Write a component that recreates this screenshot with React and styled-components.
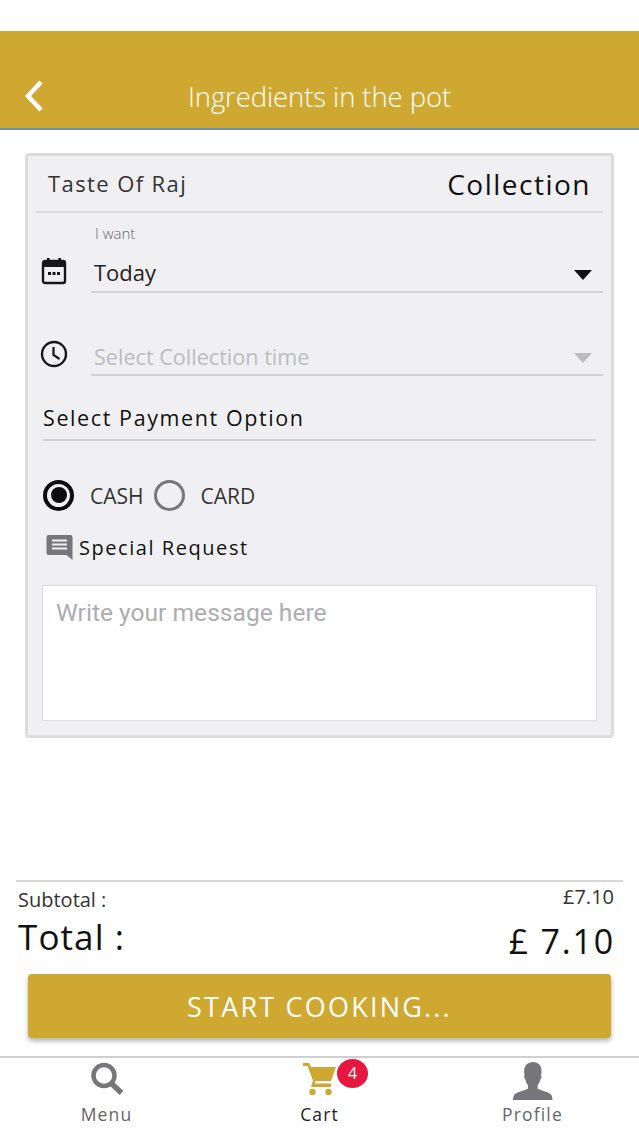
import React from 'react'
import styled, { createGlobalStyle } from 'styled-components'

const GOLD = '#cfa832'

const GlobalStyle = createGlobalStyle`
    html, body {
        margin: 0;
        padding: 0;
        background: #fff;
    }

    * {
        box-sizing: border-box;
    }
`

const Page = styled.div`
    width: 639px;
    height: 1136px;
    display: flex;
    flex-direction: column;
    overflow: hidden;
    font-family: "Open Sans", "Noto Sans", sans-serif;
    color: #111;
    background: #fff;
`

const Header = styled.header`
    height: 99px;
    margin-top: 31px;
    padding: 0 24px 13px;
    display: flex;
    align-items: flex-end;
    position: relative;
    background: ${GOLD};
    border-bottom: 2px solid #7193a6;
`

const BackIcon = styled.svg`
    width: 20px;
    height: 32px;
    margin-bottom: 3px;
`

const Title = styled.h1`
    position: absolute;
    left: 0;
    right: 0;
    bottom: 13px;
    margin: 0;
    text-align: center;
    font-size: 27.5px;
    line-height: 36px;
    font-weight: 300;
    letter-spacing: -0.1px;
    color: #fff;
`

const Card = styled.section`
    height: 585px;
    margin: 23px 25px 0;
    padding: 0 8px;
    background: #f0f0f2;
    border: 3px solid #dcdcdf;
    border-radius: 4px;
`

const CardHead = styled.div`
    height: 57px;
    padding: 0 12px;
    display: flex;
    justify-content: space-between;
    align-items: center;
    border-bottom: 2px solid #dbdbdd;
`

const Restaurant = styled.span`
    margin-bottom: 2px;
    font-size: 22px;
    letter-spacing: 1.4px;
    color: #333;
`

const Mode = styled.span`
    font-size: 28px;
    letter-spacing: 1.5px;
    color: #111;
`

const FieldRow = styled.div`
    height: ${p => p.$height}px;
    margin-top: ${p => p.$top || 0}px;
    display: flex;
    align-items: flex-end;
`

const FieldIcon = styled.div`
    width: 55px;
    flex: none;
    display: flex;
    justify-content: center;
    padding: 0 20px ${p => p.$bottom}px 0;
    height: 100%;
    align-items: flex-end;
`

const Field = styled.div`
    flex: 1;
    border-bottom: 2px solid #d2d2d4;
`

const FieldLabel = styled.div`
    padding-left: 4px;
    font-size: 15px;
    line-height: 20px;
    font-weight: 300;
    color: #666;
    margin-bottom: 12px;
`

const FieldValue = styled.div`
    height: 36px;
    padding: 0 11px ${p => (p.$muted ? 0 : 2)}px 3px;
    display: flex;
    justify-content: space-between;
    align-items: center;
    font-size: ${p => (p.$muted ? 21.6 : 22)}px;
    color: ${p => (p.$muted ? '#bcbcbe' : '#222')};
`

const Caret = styled.span`
    width: 0;
    height: 0;
    margin-top: ${p => (p.$muted ? 4 : 6)}px;
    border-left: 9.5px solid transparent;
    border-right: 9.5px solid transparent;
    border-top: 10px solid ${p => (p.$muted ? '#bcbcbe' : '#111')};
`

const SectionTitle = styled.div`
    height: 43px;
    margin: 22px 7px 0 7px;
    font-size: 21.5px;
    line-height: 39px;
    letter-spacing: 1.6px;
    color: #111;
    border-bottom: 2px solid #d2d2d4;
`

const RadioRow = styled.div`
    margin: 38px 0 0 7px;
    display: flex;
    align-items: center;
    height: 32px;
`

const Radio = styled.span`
    width: 31px;
    height: 31px;
    flex: none;
    border-radius: 50%;
    border: ${p => (p.$checked ? '4px solid #0c0c0c' : '3px solid #77777a')};
    display: flex;
    align-items: center;
    justify-content: center;

    &::after {
        content: '';
        display: ${p => (p.$checked ? 'block' : 'none')};
        width: 16px;
        height: 16px;
        border-radius: 50%;
        background: #0c0c0c;
    }
`

const RadioLabel = styled.span`
    margin: 2px 10px 0 16px;
    font-size: 21px;
    color: #333;
`

const RequestRow = styled.div`
    margin: 22px 0 0 10px;
    display: flex;
    align-items: center;
    height: 28px;
    gap: 6px;
    font-size: 20px;
    letter-spacing: 1.55px;
    color: #111;
`

const MessageBox = styled.div`
    height: 136px;
    margin: 24px 6px 0 6px;
    padding: 9px 13px;
    background: #fff;
    border: 1px solid #dcdcde;
    font-family: Roboto, sans-serif;
    font-size: 24.6px;
    line-height: 36px;
    color: #adadb1;
`

const Summary = styled.section`
    margin: 142px 16px 0;
    padding: 0 9px 0 2px;
    border-top: 2px solid #d8d8d8;
`

const SummaryRow = styled.div`
    height: ${p => p.$height}px;
    display: flex;
    justify-content: space-between;
    align-items: flex-start;
`

const SubtotalLabel = styled.span`
    font-size: 20px;
    line-height: 26px;
    margin-top: 5px;
    color: #333;
`

const SubtotalValue = styled.span`
    font-size: 20px;
    line-height: 26px;
    margin-top: 2px;
    color: #333;
`

const TotalLabel = styled.span`
    font-size: 35px;
    line-height: 48px;
    margin-top: -4px;
    letter-spacing: 1.1px;
    color: #111;
`

const TotalValue = styled.span`
    font-size: 34px;
    line-height: 48px;
    margin-right: -1px;
    letter-spacing: 1.8px;
    color: #111;
`

const CookButton = styled.button`
    height: 64px;
    margin: 0 28px;
    flex: none;
    border: 0;
    border-radius: 4px;
    background: ${GOLD};
    box-shadow: 0 3px 5px rgba(0, 0, 0, 0.3);
    font-family: inherit;
    font-size: 27px;
    letter-spacing: 2.2px;
    color: #fff;
    padding: 0;
`

const TabBar = styled.nav`
    height: 80px;
    margin-top: 18px;
    display: grid;
    grid-template-columns: repeat(3, 213px);
    border-top: 2px solid #cfcfcf;
`

const Tab = styled.div`
    display: flex;
    flex-direction: column;
    align-items: center;
    position: relative;
    font-size: 17.5px;
    letter-spacing: 1.15px;
    color: ${p => (p.$active ? '#222' : '#66666a')};
`

const TabIcon = styled.div`
    height: 44px;
    padding-top: 4px;
    display: flex;
    align-items: flex-start;
    justify-content: center;
`

const TabLabel = styled.span`
    line-height: 24px;
`

const Badge = styled.span`
    position: absolute;
    top: 1px;
    left: 124px;
    width: 31px;
    height: 29px;
    border-radius: 50%;
    background: #e8173f;
    color: #fff;
    font-size: 16px;
    letter-spacing: 0;
    line-height: 29px;
    text-align: center;
`

const CalendarIcon = () => (
    <svg width="26" height="28" viewBox="0 0 26 28">
        <path d="M6 1h2.6v3H6zM17.4 1H20v3h-2.600z" fill="#17171a" />
        <rect x="2" y="4" width="22" height="22" rx="2" fill="none" stroke="#17171a" strokeWidth="2.4" />
        <rect x="2" y="4" width="22" height="6" fill="#17171a" />
        <path d="M7 15h3v3H7zM11.500 15h3v3h-3zM16 15h3v3h-3z" fill="#17171a" />
    </svg>
)

const ClockIcon = () => (
    <svg width="28" height="28" viewBox="0 0 28 28" fill="none" stroke="#17171a">
        <circle cx="14" cy="14" r="12" strokeWidth="2.400" />
        <path d="M13.500 7v8l6 4" strokeWidth="2.200" />
    </svg>
)

const ChatIcon = () => (
    <svg width="27" height="26" viewBox="0 0 27 26">
        <path d="M2.500 1h22A2 2 0 0 1 26.500 3v23l-6-5h-18a2 2 0 0 1-2-2V3a2 2 0 0 1 2-2z" fill="#77777b" />
        <path d="M6 6.500h15M6 10.500h15M6 14.500h15" stroke="#f0f0f2" strokeWidth="2" />
    </svg>
)

const SearchIcon = () => (
    <svg width="34" height="34" viewBox="0 0 34 34" fill="none" stroke="#77777b">
        <circle cx="14" cy="13.500" r="10.500" strokeWidth="4.500" />
        <path d="M22 22l9.500 9" strokeWidth="5.500" />
    </svg>
)

const CartIcon = () => (
    <svg width="34" height="34" viewBox="0 0 34 34" fill={GOLD}>
        <path d="M0 1h6l2.200 4H33l-5 14H12.500l-.8 2.500H28V25H8l2-6.500L4.500 4H0z" />
        <circle cx="9.500" cy="30" r="3.200" />
        <circle cx="25.500" cy="30" r="3.200" />
    </svg>
)

const PersonIcon = () => (
    <svg width="40" height="38" viewBox="0 0 40 38" fill="#77777b">
        <path d="M20 0c5.500 0 8.500 3.500 8.500 9 0 2-.3 3.500-.5 4.800.8.300.6 2.200-.4 3.200-.8 3-1.800 4.800-3 6.200v3.300c3 2 9.500 3 12.800 5.500 1.500 1.200 2.100 3.500 2.100 6H0c0-2.500.6-4.800 2.100-6C5.400 29.500 12 28.500 15 26.500v-3.300c-1.200-1.400-2.200-3.200-3-6.200-1-1-1.200-2.900-.4-3.200-.2-1.300-.5-2.800-.5-4.800C11.500 3.500 14.500 0 20 0z" />
    </svg>
)

const App = () => {
    return (
        <Page>
            <GlobalStyle />
            <Header>
                <BackIcon viewBox="0 0 20 32" fill="none" stroke="#fff" strokeWidth="4.500">
                    <path d="M17 2L4 16l13 14" />
                </BackIcon>
                <Title>Ingredients in the pot</Title>
            </Header>

            <Card>
                <CardHead>
                    <Restaurant>Taste Of Raj</Restaurant>
                    <Mode>Collection</Mode>
                </CardHead>

                <FieldRow $height={80}>
                    <FieldIcon $bottom={8}><CalendarIcon /></FieldIcon>
                    <Field>
                        <FieldLabel>I want</FieldLabel>
                        <FieldValue>Today<Caret /></FieldValue>
                    </Field>
                </FieldRow>

                <FieldRow $height={38} $top={45}>
                    <FieldIcon $bottom={8}><ClockIcon /></FieldIcon>
                    <Field>
                        <FieldValue $muted>Select Collection time<Caret $muted /></FieldValue>
                    </Field>
                </FieldRow>

                <SectionTitle>Select Payment Option</SectionTitle>

                <RadioRow>
                    <Radio $checked />
                    <RadioLabel>CASH</RadioLabel>
                    <Radio />
                    <RadioLabel>CARD</RadioLabel>
                </RadioRow>

                <RequestRow>
                    <ChatIcon />
                    Special Request
                </RequestRow>

                <MessageBox>Write your message here</MessageBox>
            </Card>

            <Summary>
                <SummaryRow $height={35}>
                    <SubtotalLabel>Subtotal :</SubtotalLabel>
                    <SubtotalValue>£7.10</SubtotalValue>
                </SummaryRow>
                <SummaryRow $height={57}>
                    <TotalLabel>Total :</TotalLabel>
                    <TotalValue>£ 7.10</TotalValue>
                </SummaryRow>
            </Summary>

            <CookButton>START COOKING...</CookButton>

            <TabBar>
                <Tab>
                    <TabIcon><SearchIcon /></TabIcon>
                    <TabLabel>Menu</TabLabel>
                </Tab>
                <Tab $active>
                    <TabIcon><CartIcon /></TabIcon>
                    <Badge>4</Badge>
                    <TabLabel>Cart</TabLabel>
                </Tab>
                <Tab>
                    <TabIcon><PersonIcon /></TabIcon>
                    <TabLabel>Profile</TabLabel>
                </Tab>
            </TabBar>
        </Page>
    )
}

export default App
